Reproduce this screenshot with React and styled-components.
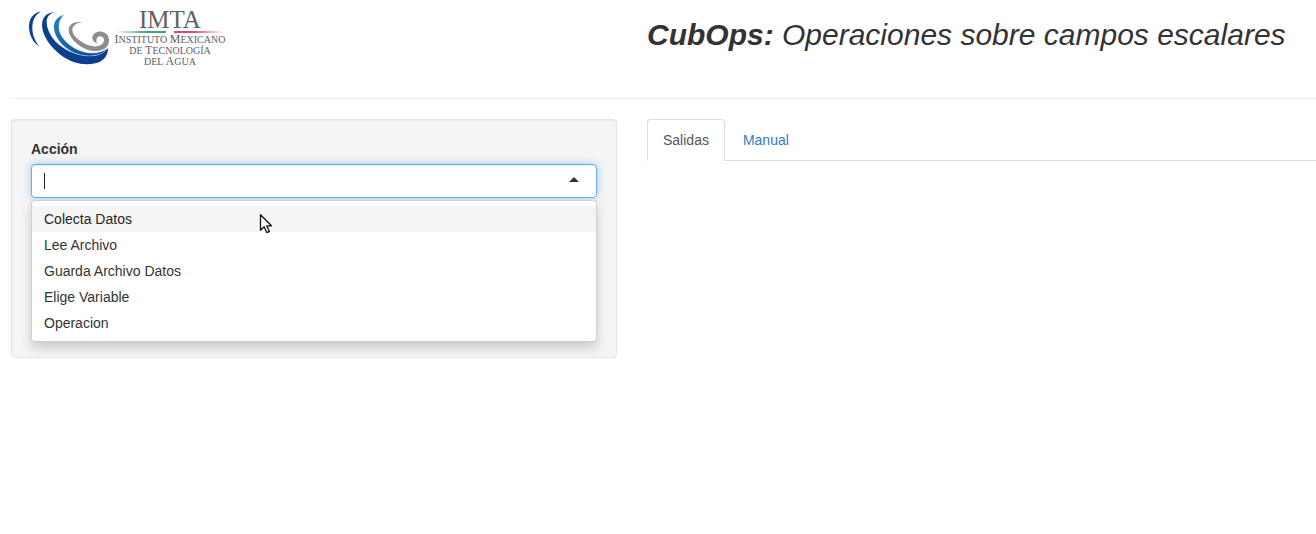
import React, { useState } from "react";
import styled, { createGlobalStyle, css } from "styled-components";

const GlobalStyle = createGlobalStyle`
  * { box-sizing: border-box; }
  body {
    margin: 0;
    background: #fff;
    color: #333;
    font: 14px/20px "Liberation Sans", Arial, sans-serif;
  }
`;

const Page = styled.div`
  padding-left: 11px;
`;

const Columns = styled.div`
  display: grid;
  grid-template-columns: minmax(0, 606fr) minmax(0, 669fr);
  column-gap: 30px;
  align-items: start;
`;

const Header = styled(Columns).attrs({ as: "header" })`
  min-height: 98px;
`;

const Brand = styled.div`
  display: flex;
  align-items: flex-start;
  gap: 4px;
  padding: 9px 0 0 16px;
`;

const Swirl = styled.svg`
  display: block;
  width: 84px;
  height: 60px;
`;

const BrandText = styled.div`
  display: flex;
  flex-direction: column;
  align-items: center;
  width: 110px;
  color: #5f6066;
  font-family: "Liberation Serif", serif;
  white-space: nowrap;
`;

const BrandName = styled.span`
  font-size: 25px;
  line-height: 22px;
`;

const BrandRule = styled.span`
  display: flex;
  justify-content: space-between;
  width: 108px;
  height: 2px;
  margin-bottom: 1px;
`;

const RulePart = styled.span`
  width: 50px;
  background: linear-gradient(${({ $side }) => ($side === "left" ? "90deg" : "270deg")}, #fff, ${({ $color }) => $color} 60%);
`;

const BrandLine = styled.span`
  font-size: 10px;
  line-height: 11px;
`;

const BrandCap = styled.span`
  font-size: 12px;
  line-height: 0;
`;

const Title = styled.h2`
  margin: 0;
  padding-top: 18px;
  font-size: 30px;
  line-height: 33px;
  font-weight: 400;
  font-style: italic;
  white-space: nowrap;

  strong { font-weight: 700; }
`;

const Divider = styled.hr`
  margin: 0 0 20px;
  border: 0;
  border-top: 1px solid #eee;
`;

const Panel = styled.form`
  padding: 19px 19px 15px;
  border: 1px solid #e3e3e3;
  border-radius: 4px;
  background: #f5f5f5;
  box-shadow: inset 0 1px 1px rgba(0, 0, 0, 0.05);
`;

const Label = styled.label`
  display: block;
  margin-bottom: 5px;
  font-weight: 700;
`;

const Control = styled.div`
  display: flex;
  align-items: center;
  height: 34px;
  padding: 0 17px 0 12px;
  border: 1px solid #66afe9;
  border-radius: 4px;
  background: #fff;
  box-shadow: inset 0 1px 1px rgba(0, 0, 0, 0.075), 0 0 8px rgba(102, 175, 233, 0.6);
`;

const TextCursor = styled.span`
  width: 1px;
  height: 16px;
  background: #222;
`;

const Input = styled.input`
  flex: 1;
  min-width: 0;
  padding: 0;
  border: 0;
  outline: 0;
  background: transparent;
  color: inherit;
  font: inherit;
`;

const Arrow = styled.span`
  margin-bottom: 3px;
  border: solid transparent;
  border-width: 0 5px 5px;
  border-bottom-color: #333;
`;

const Menu = styled.div`
  margin-top: 2px;
  padding: 5px 0;
  border: 1px solid #d0d0d0;
  border-bottom-color: #ccc;
  border-radius: 4px;
  background: #fff;
  box-shadow: 0 6px 12px rgba(0, 0, 0, 0.175);
`;

const Option = styled.button`
  position: relative;
  display: block;
  width: 100%;
  padding: 3px 12px;
  border: 0;
  background: ${({ $active }) => ($active ? "#f5f5f5" : "#fff")};
  color: ${({ $active }) => ($active ? "#262626" : "#333")};
  font: inherit;
  text-align: left;
`;

const Pointer = styled.svg`
  position: absolute;
  top: 7px;
  left: 227px;
  width: 14px;
  height: 22px;
  z-index: 1;
`;

const Tabs = styled.nav`
  display: flex;
  gap: 2px;
  border-bottom: 1px solid #ddd;
`;

const Tab = styled.a`
  margin-bottom: -1px;
  padding: 10px 15px;
  border: 1px solid transparent;
  border-radius: 4px 4px 0 0;
  color: #337ab7;
  text-decoration: none;
  ${({ $active }) =>
    $active &&
    css`
      border-color: #ddd #ddd #fff;
      background: #fff;
      color: #555;
    `}
`;

const actions = ["Colecta Datos", "Lee Archivo", "Guarda Archivo Datos", "Elige Variable", "Operacion"];

function Logo() {
  return (
    <Brand>
      <Swirl viewBox="21 27 252 180" aria-hidden="true">
        <defs>
          <linearGradient id="azure" x1="0" y1="0" x2="1" y2="1">
            <stop offset="0" stopColor="#2583c9" />
            <stop offset="0.4" stopColor="#1768b4" />
            <stop offset="1" stopColor="#0c428f" />
          </linearGradient>
        </defs>
        <path fill="#0b3f8f" d="M62 35C39 38 26 57 27 82C28 108 41 129 58 140C45 122 37 106 37 84C37 62 44 46 62 35Z" />
        <path fill="#0b3f8f" d="M104 37C80 37 66 52 66 76C67 105 88 139 122 165C155 190 193 197 226 190C251 184 265 166 264 143C252 159 233 169 208 168C170 167 133 151 107 125C87 103 77 77 81 57C84 46 92 40 104 37Z" />
        <path fill="url(#azure)" stroke="#fff" strokeWidth="1" d="M132 44C111 49 101 65 101 82C102 105 118 130 142 147C168 165 202 172 230 165C248 161 259 152 264 143C248 157 225 162 202 158C170 153 137 131 123 105C112 83 116 60 132 44Z" />
        <path fill="#8d8d8f" d="M187 67C164 63 146 72 146 91C147 112 168 134 195 146C218 156 243 155 257 144C272 131 270 107 254 98C238 89 218 98 217 113C217 121 223 128 231 129C227 119 231 109 240 109C252 109 256 121 249 130C238 143 216 141 195 131C174 121 158 106 157 90C157 77 169 69 187 67Z" />
      </Swirl>
      <BrandText>
        <BrandName>IMTA</BrandName>
        <BrandRule>
          <RulePart $side="left" $color="#3fa672" />
          <RulePart $side="right" $color="#dd4a78" />
        </BrandRule>
        <BrandLine><BrandCap>I</BrandCap>NSTITUTO <BrandCap>M</BrandCap>EXICANO</BrandLine>
        <BrandLine>DE <BrandCap>T</BrandCap>ECNOLOGÍA</BrandLine>
        <BrandLine>DEL <BrandCap>A</BrandCap>GUA</BrandLine>
      </BrandText>
    </Brand>
  );
}

export default function App() {
  const [value, setValue] = useState("");
  const [active, setActive] = useState(0);
  return (
    <>
      <GlobalStyle />
      <Page>
        <Header>
          <Logo />
          <Title><strong>CubOps:</strong> Operaciones sobre campos escalares</Title>
        </Header>
        <Divider />
        <Columns as="main">
          <Panel onSubmit={(e) => e.preventDefault()}>
            <Label htmlFor="accion">Acción</Label>
            <Control>
              <TextCursor />
              <Input
                id="accion"
                role="combobox"
                aria-expanded="true"
                aria-controls="acciones"
                autoComplete="off"
                value={value}
                onChange={(e) => setValue(e.target.value)}
              />
              <Arrow />
            </Control>
            <Menu id="acciones" role="listbox">
              {actions.map((name, i) => (
                <Option
                  key={name}
                  type="button"
                  role="option"
                  aria-selected={i === active}
                  $active={i === active}
                  onMouseEnter={() => setActive(i)}
                  onClick={() => setValue(name)}
                >
                  {name}
                  {i === 0 && (
                    <Pointer viewBox="0 0 14 22" aria-hidden="true">
                      <path
                        d="M1.5 1.8V17.2L5.2 13.8L7.8 19.6L10.4 18.4L7.8 12.8H12.4Z"
                        fill="#fff"
                        stroke="#111"
                        strokeWidth="1.3"
                        strokeLinejoin="round"
                      />
                    </Pointer>
                  )}
                </Option>
              ))}
            </Menu>
          </Panel>
          <Tabs>
            <Tab href="#salidas" $active aria-current="page">Salidas</Tab>
            <Tab href="#manual">Manual</Tab>
          </Tabs>
        </Columns>
      </Page>
    </>
  );
}
